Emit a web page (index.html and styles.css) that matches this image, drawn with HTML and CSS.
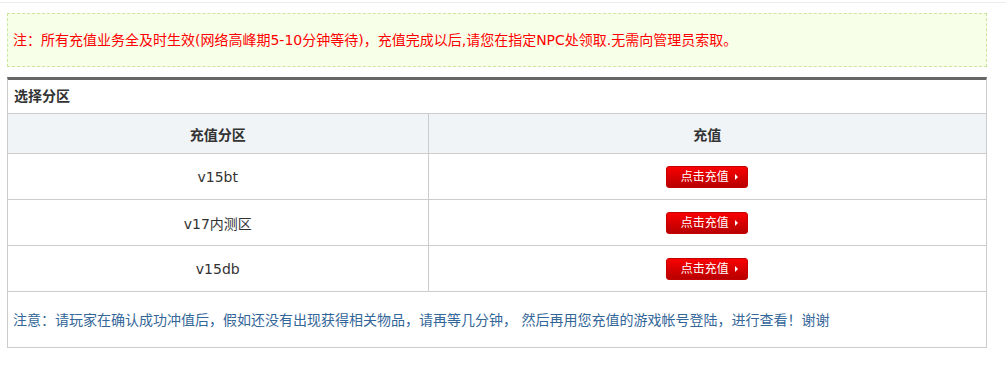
FILE: index.html
```html
<!DOCTYPE html>
<html lang="zh-CN">
<head>
<meta charset="utf-8">
<title>充值</title>
<link rel="stylesheet" href="styles.css">
</head>
<body>
<div class="topline"></div>
<div class="wrap">
  <div class="notice">注：所有充值业务全及时生效(网络高峰期5-10分钟等待)，充值完成以后,请您在指定NPC处领取.无需向管理员索取。</div>
  <div class="panel">
    <div class="panel-title">选择分区</div>
    <table class="zones">
      <colgroup><col class="c1"><col class="c2"></colgroup>
      <thead>
        <tr><th>充值分区</th><th>充值</th></tr>
      </thead>
      <tbody>
        <tr><td>v15bt</td><td><a class="btn" href="#">点击充值<span class="arrow"></span></a></td></tr>
        <tr><td>v17内测区</td><td><a class="btn" href="#">点击充值<span class="arrow"></span></a></td></tr>
        <tr><td>v15db</td><td><a class="btn" href="#">点击充值<span class="arrow"></span></a></td></tr>
      </tbody>
    </table>
    <div class="panel-foot">注意：请玩家在确认成功冲值后，假如还没有出现获得相关物品，请再等几分钟， 然后再用您充值的游戏帐号登陆，进行查看！谢谢</div>
  </div>
</div>
</body>
</html>
```
FILE: styles.css
```css
html, body {
  margin: 0;
  padding: 0;
  background: #fff;
}
body {
  font-family: "DejaVu Sans", "Noto Sans CJK SC", sans-serif;
  font-size: 14px;
  color: #333;
}
.topline {
  margin-top: 2px;
  border-top: 1px solid #ececec;
}
.wrap {
  width: 980px;
  margin-left: 7px;
}
.notice {
  margin-top: 10px;
  height: 52px;
  box-sizing: content-box;
  border: 1px dashed #cbe69e;
  background: #f7ffe8;
  color: #ff0000;
  font-size: 14px;
  line-height: 20px;
  padding: 0 5px;
  display: flex;
  align-items: center;
  width: 968px;
}
.panel {
  margin-top: 10px;
  border: 1px solid #cccccc;
  border-top: 3px solid #666666;
}
.panel-title {
  height: 33px;
  border-bottom: 1px solid #cccccc;
  box-sizing: content-box;
  font-weight: bold;
  font-size: 14px;
  line-height: 33px;
  padding-left: 6px;
  color: #333;
}
.zones {
  width: 100%;
  border-collapse: collapse;
  table-layout: fixed;
}
.zones .c1 { width: 420px; }
.zones th, .zones td {
  border-bottom: 1px solid #cccccc;
  text-align: center;
  padding: 0;
}
.zones th:first-child, .zones td:first-child {
  border-right: 1px solid #cccccc;
}
.zones th {
  height: 39px;
  background: #f0f4f7;
  font-weight: bold;
  font-size: 14px;
  color: #333;
}
.zones td {
  height: 45px;
  font-size: 14px;
  color: #333;
}
.btn {
  display: inline-flex;
  align-items: center;
  justify-content: center;
  gap: 6px;
  width: 82px;
  height: 22px;
  box-sizing: border-box;
  border: 1px solid #c40000;
  border-radius: 3px;
  background: linear-gradient(#f90000, #b80000);
  color: #fff;
  font-size: 12px;
  line-height: 20px;
  text-decoration: none;
  padding-left: 4px;
  vertical-align: middle;
}
.arrow {
  width: 0;
  height: 0;
  border-left: 3px solid #fff;
  border-top: 3px solid transparent;
  border-bottom: 3px solid transparent;
}
.panel-foot {
  height: 55px;
  display: flex;
  align-items: center;
  padding-left: 5px;
  color: #336699;
  font-size: 14px;
  line-height: 20px;
}
```
